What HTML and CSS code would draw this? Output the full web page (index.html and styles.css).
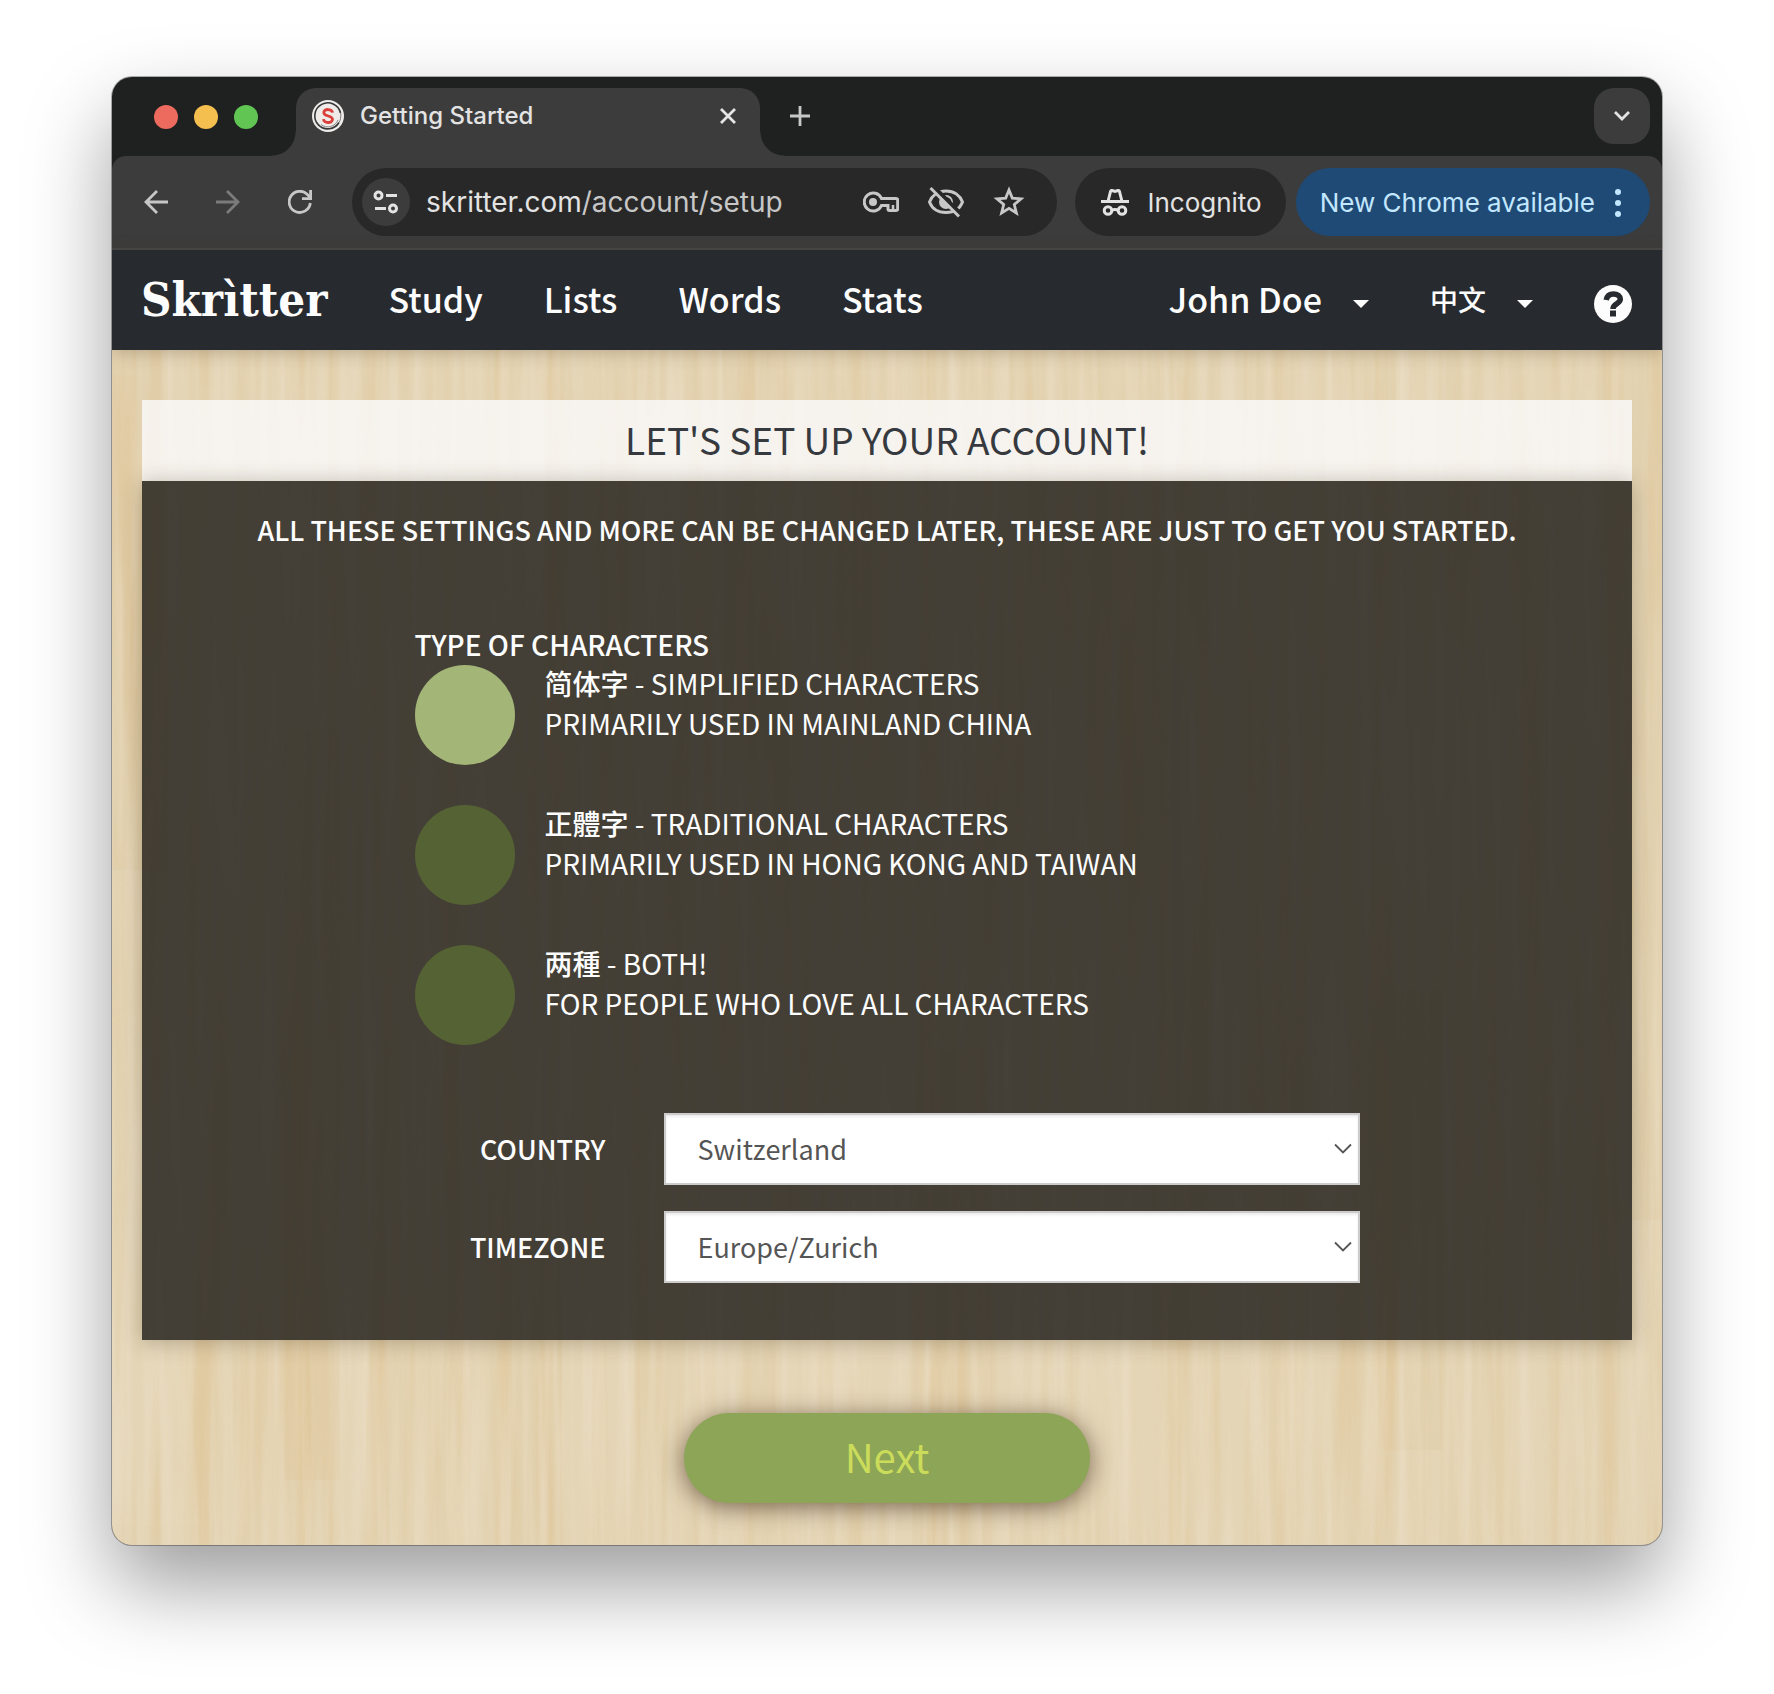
FILE: index.html
```html
<!DOCTYPE html>
<html lang="en">
<head>
<meta charset="utf-8">
<meta name="viewport" content="width=device-width, initial-scale=1">
<title>Getting Started</title>
<link rel="stylesheet" href="styles.css">
</head>
<body>
<div class="window">
  <div class="tabstrip">
    <div class="lights"><span class="light light-close"></span><span class="light light-min"></span><span class="light light-max"></span></div>
    <div class="tab">
      <svg class="favicon" width="32" height="32" viewBox="0 0 32 32" aria-hidden="true">
        <circle cx="16" cy="16" r="16" fill="#eeebe8"/>
        <path d="M28.500 13A13 13 0 1 0 27 22.500" fill="none" stroke="#35383a" stroke-width="1.600"/>
        <path d="M26 20A11 11 0 0 1 9 24.500" fill="none" stroke="#8a8886" stroke-width="1"/>
        <path d="M28.700 13C29.200 17 28.500 20 27 22.500" fill="none" stroke="#77797a" stroke-width="1"/>
        <path d="M20.500 12.700C20 8.500 11.800 8.500 11.800 12.500C11.800 17 20.500 15 20.500 19.300C20.500 23.700 12 23.500 11.500 19.200" fill="none" stroke="#dc3f3a" stroke-width="2.800"/>
      </svg>
      <span class="tab-title">Getting Started</span>
      <button class="icon-btn" aria-label="Close tab"><svg width="16" height="16" viewBox="0 0 16 16"><path d="M1 1L15 15M15 1L1 15" stroke="#e6e6e6" stroke-width="2.800"/></svg></button>
    </div>
    <button class="icon-btn new-tab" aria-label="New tab"><svg width="20" height="20" viewBox="0 0 20 20"><path d="M10 0V20M0 10H20" stroke="#c7c7c7" stroke-width="2.800"/></svg></button>
    <button class="tab-search" aria-label="Search tabs"><svg width="18" height="12" viewBox="0 0 18 12"><path d="M2 2L9 9L16 2" fill="none" stroke="#e3e3e3" stroke-width="2.800"/></svg></button>
  </div>

  <div class="toolbar">
    <div class="history">
      <button class="icon-btn" aria-label="Back"><svg width="24" height="24" viewBox="0 0 24 24"><path d="M24 12H2M13 1L2 12L13 23" fill="none" stroke="#c7c7c7" stroke-width="2.800"/></svg></button>
      <button class="icon-btn" aria-label="Forward"><svg width="24" height="24" viewBox="0 0 24 24"><path d="M0 12H22M11 1L22 12L11 23" fill="none" stroke="#7b7b7b" stroke-width="2.800"/></svg></button>
      <button class="icon-btn" aria-label="Reload"><svg width="24" height="24" viewBox="0 0 24 24"><path d="M22.300 13A10.600 10.600 0 1 1 20 5.200L22.500 8M22.600 0V8.600H14" fill="none" stroke="#c7c7c7" stroke-width="2.800"/></svg></button>
    </div>
    <div class="omnibox">
      <button class="site-info" aria-label="Site information"><svg width="26" height="26" viewBox="0 0 26 26" fill="none" stroke="#e3e3e3" stroke-width="3"><circle cx="5.500" cy="6.500" r="3.500"/><path d="M13 6.500H24M2 19.500H13"/><circle cx="20" cy="19.500" r="3.500"/></svg></button>
      <span class="url"><span class="host">skritter.com</span>/account/setup</span>
      <div class="omni-icons">
        <button class="icon-btn" aria-label="Passwords"><svg width="36" height="24" viewBox="0 0 36 24"><path d="M18.500 8.500A9 9 0 1 0 18.500 15.500H25V19Q25 20.500 26.500 20.500H33Q34.700 20.500 34.700 19V10Q34.700 8.500 33 8.500Z" fill="none" stroke="#c7c7c7" stroke-width="3"/><circle cx="10" cy="12" r="4" fill="#c7c7c7"/><path d="M30 20V15" stroke="#c7c7c7" stroke-width="2.500"/></svg></button>
        <button class="icon-btn" aria-label="Third-party cookies blocked"><svg width="36" height="32" viewBox="0 0 36 32"><path d="M18 5C26 5 32 9.500 34.500 16C32 22.500 26 26.500 18 26.500C10 26.500 4 22.500 1.500 16C4 9.500 10 5 18 5Z" fill="none" stroke="#c7c7c7" stroke-width="3"/><circle cx="18" cy="16" r="7" fill="#c7c7c7"/><path d="M18 12A5 5 0 0 1 22.500 16" fill="none" stroke="#282828" stroke-width="2"/><path d="M5.500 .5L34 29" stroke="#282828" stroke-width="4"/><path d="M2.500 2L31 30.500" stroke="#c7c7c7" stroke-width="3"/></svg></button>
        <button class="icon-btn" aria-label="Bookmark this tab"><svg width="32" height="32" viewBox="0 0 32 32"><path d="M16 4L19.300 12.100L28 12.800L21.300 18.500L23.400 27L16 22.400L8.600 27L10.700 18.500L4 12.800L12.700 12.100Z" fill="none" stroke="#c7c7c7" stroke-width="2.800"/></svg></button>
      </div>
    </div>
    <button class="pill incognito"><svg width="28" height="28" viewBox="0 0 28 28" fill="none" stroke="#e3e3e3" stroke-width="3"><path d="M0 12.500H28M7 12.500L9.500 2.500Q9.800 1.300 11 1.500L14 2.500L17 1.500Q18.200 1.300 18.500 2.500L21 12.500"/><circle cx="7" cy="21.500" r="3.800"/><circle cx="21" cy="21.500" r="3.800"/><path d="M10.500 21.500Q14 19.500 17.500 21.500"/></svg>Incognito</button>
    <button class="pill update">New Chrome available<svg width="6" height="28" viewBox="0 0 6 28" fill="#c2e7ff"><circle cx="3" cy="3" r="3"/><circle cx="3" cy="14" r="3"/><circle cx="3" cy="25" r="3"/></svg></button>
  </div>

  <header class="navbar">
    <a class="logo" href="#">Skrìtter</a>
    <nav class="links">
      <a href="#">Study</a>
      <a href="#">Lists</a>
      <a href="#">Words</a>
      <a href="#">Stats</a>
    </nav>
    <div class="user-menu">
      <button class="drop">John Doe<span class="caret"></span></button>
      <button class="drop lang" lang="zh">中文<span class="caret"></span></button>
      <a class="help" href="#" aria-label="Help"><svg width="38" height="38" viewBox="0 0 38 38"><circle cx="19" cy="19" r="19" fill="#fdfdfe"/><path d="M12.200 15C13 10.800 16 9 19.500 9C23.500 9 26.300 11.300 26.300 14.300C26.300 18.800 19 18.500 19 24" fill="none" stroke="#272a2f" stroke-width="5.500"/><path d="M16 25.500H22V31.500H16Z" fill="#272a2f"/></svg></a>
    </div>
  </header>

  <main class="page">
    <form class="setup">
      <h1 class="setup-title">Let's set up your account!</h1>
      <div class="panel">
        <p class="intro">All these settings and more can be changed later, these are just to get you started.</p>
        <div class="fields">
          <fieldset class="characters">
            <legend>Type of characters</legend>
            <div class="options">
              <label class="option"><input type="radio" name="characters" checked><span class="option-text"><span><span lang="zh-Hans" class="zh">简体字</span> - Simplified characters</span><span>Primarily used in mainland China</span></span></label>
              <label class="option"><input type="radio" name="characters"><span class="option-text"><span><span lang="zh-Hant" class="zh">正體字</span> - Traditional characters</span><span>Primarily used in Hong Kong and Taiwan</span></span></label>
              <label class="option"><input type="radio" name="characters"><span class="option-text"><span><span lang="zh-Hans" class="zh">两種</span> - Both!</span><span>For people who love all characters</span></span></label>
            </div>
          </fieldset>
          <div class="selects">
            <label for="country">Country</label>
            <select id="country"><option>Switzerland</option></select>
            <label for="timezone">Timezone</label>
            <select id="timezone"><option>Europe/Zurich</option></select>
          </div>
        </div>
      </div>
      <button class="next" type="button">Next</button>
    </form>
  </main>
</div>
</body>
</html>
```
FILE: styles.css
```css
* { box-sizing: border-box; }

body {
  margin: 0;
  padding: 77px 112px 148px;
  background: #fff;
  font-family: "Noto Sans CJK SC", "Noto Sans", sans-serif;
}

button {
  margin: 0;
  padding: 0;
  border: 0;
  background: none;
  color: inherit;
  font: inherit;
  cursor: pointer;
}

a { color: inherit; text-decoration: none; }
svg { display: block; flex: none; }

.window {
  border-radius: 20px;
  overflow: hidden;
  background: #1f2120;
  box-shadow: 0 0 0 1px rgba(0, 0, 0, .3), 0 40px 84px rgba(0, 0, 0, .39);
}

/* Browser frame */
.tabstrip,
.toolbar { font-family: Inter, "Open Sans", sans-serif; }

.tabstrip {
  display: flex;
  align-items: flex-start;
  padding: 11px 12px 0 42px;
}

.lights {
  display: flex;
  gap: 16px;
  padding-top: 17px;
}

.light { width: 24px; height: 24px; border-radius: 50%; }
.light-close { background: #ed6a5e; }
.light-min { background: #f5bf4f; }
.light-max { background: #61c554; }

.tab {
  position: relative;
  display: flex;
  align-items: center;
  gap: 16px;
  flex: 0 1 464px;
  margin-left: 38px;
  padding: 12px 24px 24px 16px;
  border-radius: 20px 20px 0 0;
  background: #3c3c3c;
}

.tab::before,
.tab::after {
  content: "";
  position: absolute;
  bottom: 0;
  width: 24px;
  height: 24px;
}
.tab::before { right: 100%; background: radial-gradient(circle at 0 0, transparent 23px, #3c3c3c 24px); }
.tab::after { left: 100%; background: radial-gradient(circle at 100% 0, transparent 23px, #3c3c3c 24px); }

.tab-title {
  flex: 1;
  color: #e3e3e3;
  font-size: 24px;
  font-weight: 500;
  line-height: 32px;
}

.new-tab { margin: 18px 0 0 30px; }

.tab-search {
  display: grid;
  place-items: center;
  width: 56px;
  height: 56px;
  margin-left: auto;
  border-radius: 20px;
  background: #3c3c3c;
}

.toolbar {
  display: flex;
  align-items: center;
  padding: 12px 12px 12px 32px;
  border-bottom: 2px solid #474747;
  border-radius: 14px 14px 0 0;
  background: #3c3c3c;
}

.history { display: flex; gap: 48px; }

.omnibox {
  display: flex;
  flex: 1;
  align-items: center;
  margin: 0 18px 0 40px;
  padding: 10px 32px 10px 10px;
  border-radius: 34px;
  background: #282828;
}

.site-info {
  display: grid;
  place-items: center;
  width: 48px;
  height: 48px;
  margin-right: 16px;
  border-radius: 50%;
  background: #3c3c3c;
}

.url { color: #c7c7c7; font-size: 28px; line-height: 40px; }
.host { color: #e3e3e3; }

.omni-icons {
  display: flex;
  align-items: center;
  gap: 29px;
  margin-left: auto;
}

.pill {
  display: flex;
  align-items: center;
  padding: 15px 24px 13px;
  border-radius: 34px;
  font-size: 26px;
  line-height: 40px;
  white-space: nowrap;
}
.incognito { gap: 18px; padding-left: 26px; background: #282828; color: #e3e3e3; }
.update { gap: 20px; margin-left: 10px; padding-right: 29px; background: #1f4a75; color: #c2e7ff; }

/* Site navigation */
.navbar {
  position: relative;
  display: flex;
  align-items: center;
  padding: 20px 30px 20px 29px;
  background: #272a2f;
  color: #fdfdfe;
  box-shadow: 0 2px 16px rgba(80, 60, 30, .3);
}

.logo {
  font-family: "DejaVu Serif Condensed", "DejaVu Serif", serif;
  font-size: 47px;
  font-weight: 700;
  line-height: 60px;
}

.links {
  display: flex;
  gap: 61px;
  margin-left: 61px;
}

.links,
.user-menu {
  padding-bottom: 2px;
  font-size: 34px;
  font-weight: 500;
  line-height: 58px;
}

.user-menu {
  display: flex;
  align-items: center;
  gap: 61px;
  margin-left: auto;
}

.drop { display: flex; align-items: center; gap: 31px; }
.lang { font-size: 28px; }

.caret {
  margin-top: 10px;
  border: 8px solid transparent;
  border-top-color: currentColor;
  border-bottom: 0;
}

.help { padding-top: 10px; }

/* Setup page, on a light wood floor */
.page {
  padding: 50px 30px 42px;
  background: #e4d5b6 url("data:image/svg+xml,%3Csvg xmlns='http://www.w3.org/2000/svg' width='1560' height='1200'%3E%3Cfilter id='a' x='0' y='0' width='100%25' height='100%25' color-interpolation-filters='sRGB'%3E%3CfeTurbulence type='fractalNoise' baseFrequency='.04 .002' numOctaves='4' seed='8' stitchTiles='stitch'/%3E%3CfeColorMatrix values='0 0 0 0 .87 0 0 0 0 .76 0 0 0 0 .57 2.2 0 0 0 -.9'/%3E%3C/filter%3E%3Cfilter id='b' x='0' y='0' width='100%25' height='100%25' color-interpolation-filters='sRGB'%3E%3CfeTurbulence type='fractalNoise' baseFrequency='.08 .003' numOctaves='3' seed='31' stitchTiles='stitch'/%3E%3CfeColorMatrix values='0 0 0 0 .93 0 0 0 0 .88 0 0 0 0 .79 0 2 0 0 -.8'/%3E%3C/filter%3E%3Cg fill='%23dcc296' opacity='.2'%3E%3Cpath d='M0 0H56V520H0ZM172 380H228V1130H172ZM398 900H450V1200H398ZM610 0H668V410H610ZM820 700H876V1200H820ZM1040 200H1096V1000H1040ZM1270 640H1330V1100H1270ZM1490 0H1550V870H1490Z'/%3E%3C/g%3E%3Crect width='1560' height='1200' filter='url(%23a)' opacity='.6'/%3E%3Crect width='1560' height='1200' filter='url(%23b)' opacity='.6'/%3E%3C/svg%3E");
}

.setup { display: flex; flex-direction: column; }

.setup-title {
  margin: 0;
  padding: 11px 30px 14px;
  background: rgba(250, 249, 250, .82);
  color: #36393e;
  font-size: 37px;
  font-weight: 400;
  line-height: 56px;
  text-align: center;
  text-transform: uppercase;
}

.panel {
  padding: 31px 30px 57px;
  background: rgba(35, 32, 28, .83);
  box-shadow: 0 2px 20px rgba(60, 45, 20, .3);
  color: #fdfdfe;
  font-size: 28px;
  line-height: 36px;
  text-transform: uppercase;
}

.intro {
  margin: 0 0 78px;
  font-size: 27px;
  font-weight: 500;
  text-align: center;
}

.fields { max-width: 945px; margin: 0 auto; }

.characters {
  min-width: 0;
  margin: 0 0 68px;
  padding: 0;
  border: 0;
}

.characters legend { margin-bottom: 3px; padding: 0; font-weight: 500; }
.options { display: grid; gap: 40px; }
.option { display: flex; gap: 30px; }

.option input {
  flex: none;
  width: 100px;
  height: 100px;
  margin: 0;
  border-radius: 50%;
  appearance: none;
  background: #556233;
}
.option input:checked { background: #a3b577; }

.option-text { display: flex; flex-direction: column; gap: 4px; }
.zh { font-weight: 500; }

.selects {
  display: grid;
  grid-template-columns: 191px 1fr;
  align-items: center;
  gap: 26px 58px;
}

.selects label { font-size: 27px; font-weight: 500; text-align: right; }

.selects select {
  width: 100%;
  padding: 16px 40px 16px 32px;
  border: 2px solid #ccc;
  border-radius: 0;
  appearance: none;
  background: #fff url("data:image/svg+xml,%3Csvg xmlns='http://www.w3.org/2000/svg' width='18' height='12'%3E%3Cpath d='M1 1.500L9 9.500L17 1.500' fill='none' stroke='%23555' stroke-width='1.800'/%3E%3C/svg%3E") no-repeat right 6px center;
  box-shadow: inset 0 2px 3px rgba(0, 0, 0, .08);
  color: #555;
  font-family: inherit;
  font-size: 27px;
  line-height: 36px;
}

.next {
  align-self: center;
  width: 406px;
  max-width: 100%;
  margin-top: 73px;
  padding: 13px 30px 17px;
  border-radius: 45px;
  background: #8ca557;
  box-shadow: 0 4px 24px rgba(60, 40, 20, .65);
  color: #cbdc5b;
  font-size: 40px;
  line-height: 60px;
}
```
